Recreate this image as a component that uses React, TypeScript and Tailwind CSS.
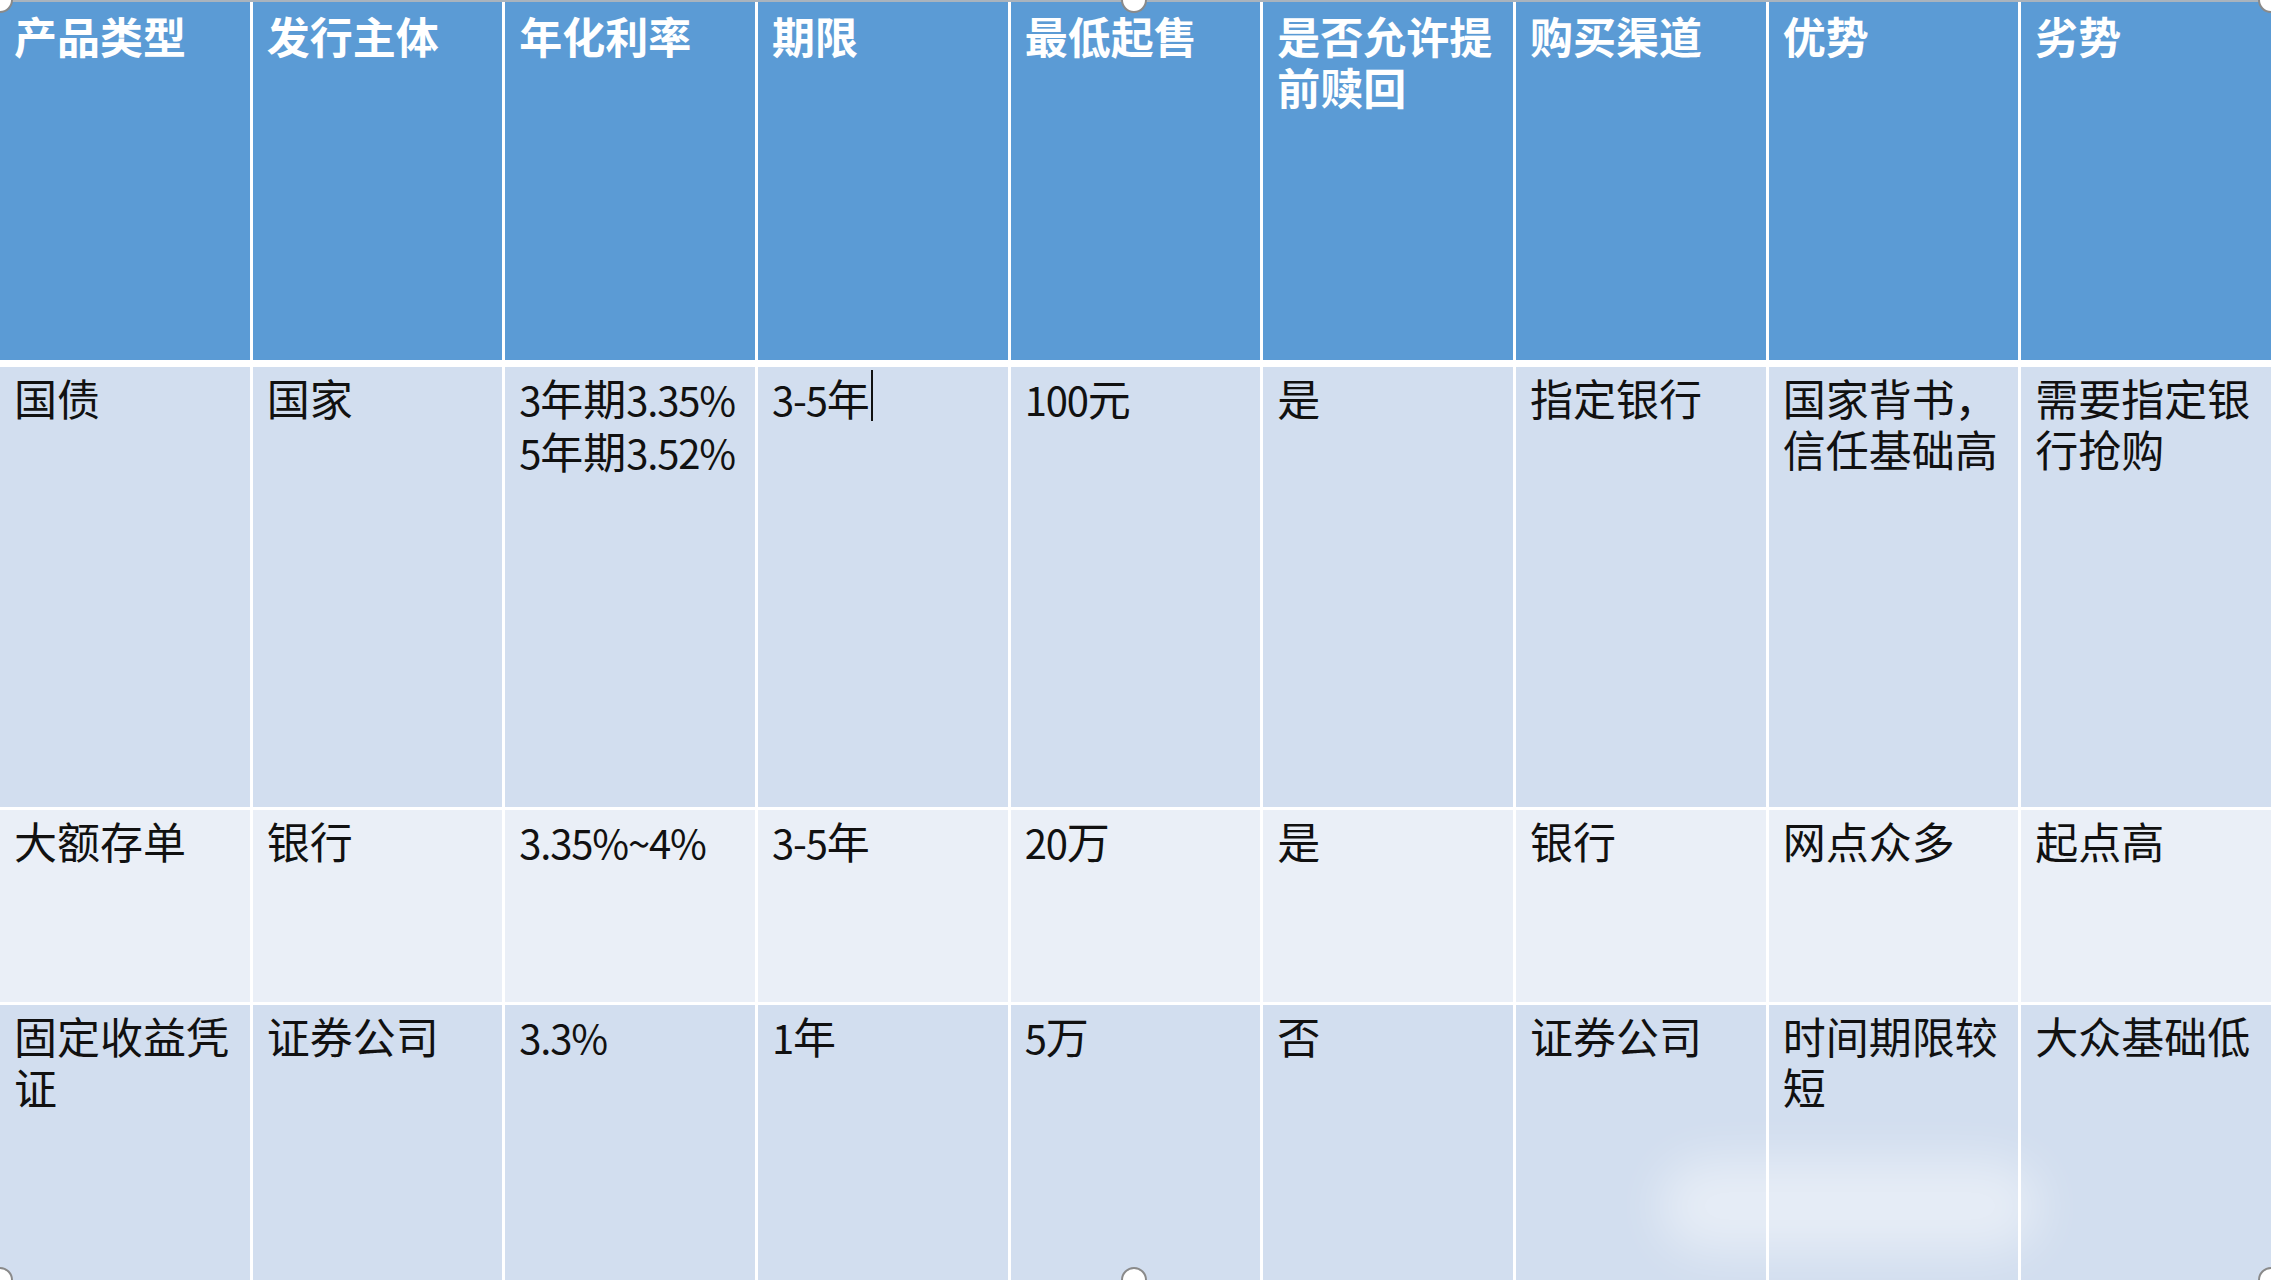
import type { ReactNode } from "react";

const headers = [
  "产品类型",
  "发行主体",
  "年化利率",
  "期限",
  "最低起售",
  "是否允许提前赎回",
  "购买渠道",
  "优势",
  "劣势",
];

interface Row {
  height: string;
  bg: string;
  cells: string[];
}

const rows: Row[] = [
  {
    height: "h-[440px]",
    bg: "bg-[#d2deef]",
    cells: [
      "国债",
      "国家",
      "3年期3.35%\n5年期3.52%",
      "3-5年|",
      "100元",
      "是",
      "指定银行",
      "国家背书，信任基础高",
      "需要指定银行抢购",
    ],
  },
  {
    height: "h-[192px]",
    bg: "bg-[#eaeff7]",
    cells: ["大额存单", "银行", "3.35%~4%", "3-5年", "20万", "是", "银行", "网点众多", "起点高"],
  },
  {
    height: "flex-1",
    bg: "bg-[#d2deef]",
    cells: ["固定收益凭证", "证券公司", "3.3%", "1年", "5万", "否", "证券公司", "时间期限较短", "大众基础低"],
  },
];

// latin runs are a bit smaller so they read like the narrow digits of the original
function renderCell(text: string): ReactNode {
  const lines = text.split("\n");
  return lines.map((line, li) => {
    const caret = line.endsWith("|");
    const body = caret ? line.slice(0, -1) : line;
    const parts = body.split(/([0-9.%~\-]+)/).filter(Boolean);
    return (
      <div key={li} className={/[0-9]/.test(body) ? "whitespace-nowrap" : ""}>
        {parts.map((p, pi) =>
          /^[0-9.%~\-]+$/.test(p) ? (
            <span key={pi} className="text-[40px] tracking-[-0.03em]">
              {p}
            </span>
          ) : (
            <span key={pi}>{p}</span>
          )
        )}
        {caret && (
          <span className="ml-[1px] inline-block h-[51px] w-[2px] translate-y-[-2px] bg-[#111] align-top" />
        )}
      </div>
    );
  });
}

function Handle({ className }: { className: string }) {
  return (
    <div
      className={`absolute h-[26px] w-[26px] rounded-full border-2 border-[#8a8a8a] bg-white ${className}`}
    />
  );
}

export default function App() {
  return (
    <div
      className="relative flex h-[1280px] w-[2271px] flex-col overflow-hidden bg-white text-[43px] leading-[51px]"
      style={{ fontFamily: '"Noto Sans CJK SC", "Noto Sans", sans-serif' }}
    >
      <div className="h-[2px] w-full bg-[#a9b3bd]" />

      <div className="grid h-[358px] grid-cols-9 gap-x-[3px]">
        {headers.map((h, i) => (
          <div key={i} className="bg-[#5b9bd5] pl-[14px] pr-[6px] pt-[8px] font-bold text-white">
            {h}
          </div>
        ))}
      </div>

      {rows.map((row, r) => (
        <div
          key={r}
          className={`grid grid-cols-9 gap-x-[3px] ${row.height} ${r === 0 ? "mt-[7px]" : "mt-[3px]"}`}
        >
          {row.cells.map((c, i) => (
            <div key={i} className={`${row.bg} pl-[14px] pr-[6px] pt-[5px] text-[#111]`}>
              {renderCell(c)}
            </div>
          ))}
        </div>
      ))}

      {/* blurred watermark patch */}
      <div className="absolute left-[1660px] top-[1160px] h-[92px] w-[380px] rounded-full bg-white/45 blur-xl" />

      {/* selection handles */}
      <Handle className="left-[1121px] top-[-13px]" />
      <Handle className="bottom-[-13px] left-[1121px]" />
      <Handle className="left-[-13px] top-[-13px]" />
      <Handle className="right-[-13px] top-[-13px]" />
      <Handle className="bottom-[-13px] left-[-13px]" />
      <Handle className="bottom-[-13px] right-[-13px]" />
    </div>
  );
}
